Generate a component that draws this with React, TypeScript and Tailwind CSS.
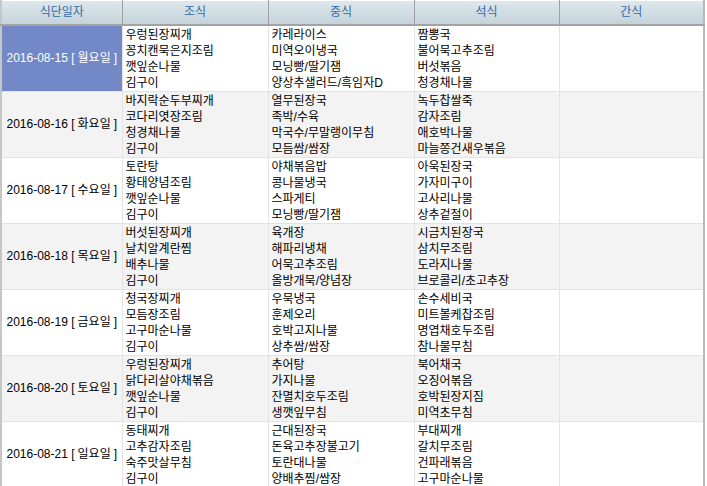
import React from 'react';

interface MealDay {
  date: string;
  day: string;
  breakfast: string[];
  lunch: string[];
  dinner: string[];
  snack: string[];
}

const days: MealDay[] = [
  {
    date: '2016-08-15',
    day: '월요일',
    breakfast: ['우렁된장찌개', '꽁치캔묵은지조림', '깻잎순나물', '김구이'],
    lunch: ['카레라이스', '미역오이냉국', '모닝빵/딸기잼', '양상추샐러드/흑임자D'],
    dinner: ['짬뽕국', '불어묵고추조림', '버섯볶음', '청경채나물'],
    snack: [],
  },
  {
    date: '2016-08-16',
    day: '화요일',
    breakfast: ['바지락순두부찌개', '코다리엿장조림', '청경채나물', '김구이'],
    lunch: ['열무된장국', '족박/수육', '막국수/무말랭이무침', '모듬쌈/쌈장'],
    dinner: ['녹두찹쌀죽', '감자조림', '애호박나물', '마늘쫑건새우볶음'],
    snack: [],
  },
  {
    date: '2016-08-17',
    day: '수요일',
    breakfast: ['토란탕', '황태양념조림', '깻잎순나물', '김구이'],
    lunch: ['야채볶음밥', '콩나물냉국', '스파게티', '모닝빵/딸기잼'],
    dinner: ['아욱된장국', '가자미구이', '고사리나물', '상추겉절이'],
    snack: [],
  },
  {
    date: '2016-08-18',
    day: '목요일',
    breakfast: ['버섯된장찌개', '날치알계란찜', '배추나물', '김구이'],
    lunch: ['육개장', '해파리냉채', '어묵고추조림', '올방개묵/양념장'],
    dinner: ['시금치된장국', '삼치무조림', '도라지나물', '브로콜리/초고추장'],
    snack: [],
  },
  {
    date: '2016-08-19',
    day: '금요일',
    breakfast: ['청국장찌개', '모듬장조림', '고구마순나물', '김구이'],
    lunch: ['우묵냉국', '훈제오리', '호박고지나물', '상추쌈/쌈장'],
    dinner: ['손수세비국', '미트볼케찹조림', '명엽채호두조림', '참나물무침'],
    snack: [],
  },
  {
    date: '2016-08-20',
    day: '토요일',
    breakfast: ['우렁된장찌개', '닭다리살야채볶음', '깻잎순나물', '김구이'],
    lunch: ['추어탕', '가지나물', '잔멸치호두조림', '생깻잎무침'],
    dinner: ['북어채국', '오징어볶음', '호박된장지짐', '미역초무침'],
    snack: [],
  },
  {
    date: '2016-08-21',
    day: '일요일',
    breakfast: ['동태찌개', '고추감자조림', '숙주맛살무침', '김구이'],
    lunch: ['근대된장국', '돈육고추장불고기', '토란대나물', '양배추찜/쌈장'],
    dinner: ['부대찌개', '갈치무조림', '건파래볶음', '고구마순나물'],
    snack: [],
  },
];

const headers = ['식단일자', '조식', '중식', '석식', '간식'];

const MenuCell: React.FC<{ items: string[] }> = ({ items }) => (
  <td className="border border-[#e3e3e3] px-[3px] pt-px pb-0 align-top leading-[16px] h-[66px]">
    {items.map((it) => (
      <div key={it} className="whitespace-nowrap overflow-hidden">{it}</div>
    ))}
  </td>
);

const App: React.FC = () => {
  return (
    <div
      className="w-[707px] h-[486px] overflow-hidden bg-white text-[12px] text-black"
      style={{ fontFamily: '"Liberation Sans", "Noto Sans CJK KR", sans-serif' }}
    >
      <table className="table-fixed border-collapse w-[705px] border-l-2 border-r-2 border-l-[#c6c6c6] border-r-[#b8b8b8]">
        <colgroup>
          <col className="w-[121px]" />
          <col className="w-[146px]" />
          <col className="w-[146px]" />
          <col className="w-[145px]" />
          <col className="w-[145px]" />
        </colgroup>
        <thead>
          <tr className="h-[24px] bg-gradient-to-b from-[#dee7ec] to-[#c3d2da]">
            {headers.map((h) => (
              <th
                key={h}
                className="font-normal text-[#2e6aa6] text-center border-t border-t-white border-b-2 border-b-[#a3a3a3] border-x border-x-[#a0a0a0] p-0"
              >
                {h}
              </th>
            ))}
          </tr>
        </thead>
        <tbody>
          {days.map((d, i) => (
            <tr key={d.date} className={i % 2 === 1 ? 'bg-[#f3f3f3]' : 'bg-white'}>
              <td
                className={
                  i === 0
                    ? 'border border-[#e3e3e3] bg-[#7388c6] text-white text-center whitespace-nowrap p-0'
                    : 'border border-[#e3e3e3] text-center whitespace-nowrap p-0'
                }
              >
                {d.date} <span className="pr-[3px]">[</span>{d.day}<span className="pl-[3px]">]</span>
              </td>
              <MenuCell items={d.breakfast} />
              <MenuCell items={d.lunch} />
              <MenuCell items={d.dinner} />
              <MenuCell items={d.snack} />
            </tr>
          ))}
        </tbody>
      </table>
    </div>
  );
};

export default App;
